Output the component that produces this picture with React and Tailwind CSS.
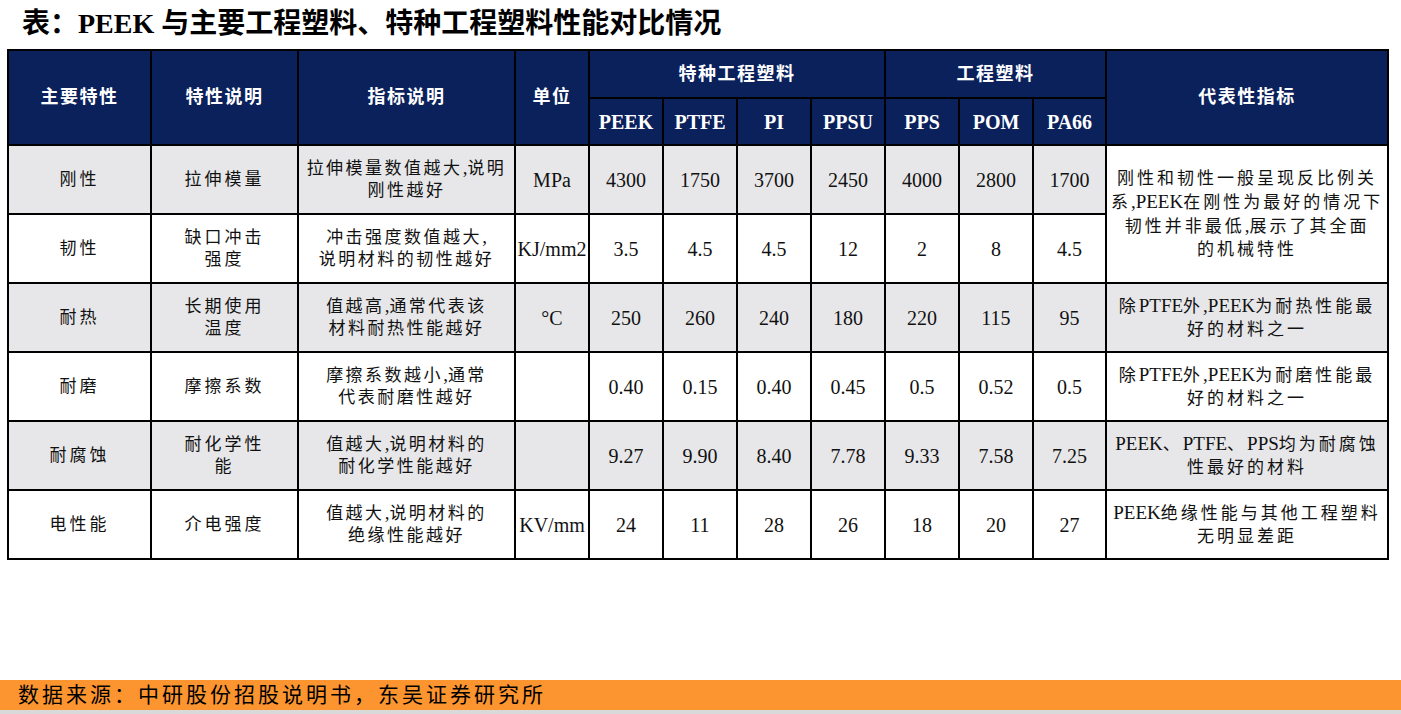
import React from "react"

const serif = { fontFamily: '"Liberation Serif", "Noto Sans CJK SC", serif' }

const cols = [143, 147, 217, 74, 74, 74, 74, 74, 74, 74, 73, 282]

const rows = [
  {
    name: "刚性",
    prop: ["拉伸模量"],
    desc: ["拉伸模量数值越大,说明", "刚性越好"],
    unit: "MPa",
    vals: ["4300", "1750", "3700", "2450", "4000", "2800", "1700"],
    note: ["刚性和韧性一般呈现反比例关", "系,PEEK在刚性为最好的情况下", "韧性并非最低,展示了其全面", "的机械特性"],
    span: 2,
    gray: true,
  },
  {
    name: "韧性",
    prop: ["缺口冲击", "强度"],
    desc: ["冲击强度数值越大,", "说明材料的韧性越好"],
    unit: "KJ/mm2",
    vals: ["3.5", "4.5", "4.5", "12", "2", "8", "4.5"],
    note: null,
  },
  {
    name: "耐热",
    prop: ["长期使用", "温度"],
    desc: ["值越高,通常代表该", "材料耐热性能越好"],
    unit: "°C",
    vals: ["250", "260", "240", "180", "220", "115", "95"],
    note: ["除PTFE外,PEEK为耐热性能最", "好的材料之一"],
    gray: true,
  },
  {
    name: "耐磨",
    prop: ["摩擦系数"],
    desc: ["摩擦系数越小,通常", "代表耐磨性越好"],
    unit: "",
    vals: ["0.40", "0.15", "0.40", "0.45", "0.5", "0.52", "0.5"],
    note: ["除PTFE外,PEEK为耐磨性能最", "好的材料之一"],
  },
  {
    name: "耐腐蚀",
    prop: ["耐化学性", "能"],
    desc: ["值越大,说明材料的", "耐化学性能越好"],
    unit: "",
    vals: ["9.27", "9.90", "8.40", "7.78", "9.33", "7.58", "7.25"],
    note: ["PEEK、PTFE、PPS均为耐腐蚀", "性最好的材料"],
    gray: true,
  },
  {
    name: "电性能",
    prop: ["介电强度"],
    desc: ["值越大,说明材料的", "绝缘性能越好"],
    unit: "KV/mm",
    vals: ["24", "11", "28", "26", "18", "20", "27"],
    note: ["PEEK绝缘性能与其他工程塑料", "无明显差距"],
  },
]

// latin runs inside chinese text are set a little larger and without tracking
const Mixed = ({ text }) =>
  text.split(/([A-Za-z0-9,]+)/).map((part, i) =>
    /^[A-Za-z0-9,]+$/.test(part) ? (
      <span key={i} className="text-[19px] tracking-normal">{part}</span>
    ) : (
      <span key={i}>{part}</span>
    )
  )

const Lines = ({ lines }) => (
  <div className="whitespace-nowrap">
    {lines.map((l, i) => (
      <div key={i}>
        <Mixed text={l} />
      </div>
    ))}
  </div>
)

const th = "border-2 border-black text-white font-bold text-center align-middle p-0"
const td = "border-2 border-black text-center align-middle p-0 text-[#111]"

export default function App() {
  return (
    <div className="w-[1401px] h-[714px] flex flex-col bg-white overflow-hidden" style={serif}>
      <h1 className="h-[49px] pl-[22px] pt-[6px] text-[28px] font-bold text-black leading-[36px]">
        表：PEEK 与主要工程塑料、特种工程塑料性能对比情况
      </h1>

      <table className="ml-[7px] w-[1380px] table-fixed border-collapse border-t border-t-[#bbb]">
        <colgroup>
          {cols.map((w, i) => (
            <col key={i} style={{ width: w }} />
          ))}
        </colgroup>
        <thead className="bg-[#0a215c]">
          <tr className="h-[48px]">
            <th rowSpan={2} className={`${th} text-[18px] tracking-[1.5px]`}>主要特性</th>
            <th rowSpan={2} className={`${th} text-[18px] tracking-[1.5px]`}>特性说明</th>
            <th rowSpan={2} className={`${th} text-[18px] tracking-[1.5px]`}>指标说明</th>
            <th rowSpan={2} className={`${th} text-[18px] tracking-[1.5px]`}>单位</th>
            <th colSpan={4} className={`${th} text-[18px] tracking-[1.5px]`}>特种工程塑料</th>
            <th colSpan={3} className={`${th} text-[18px] tracking-[1.5px]`}>工程塑料</th>
            <th rowSpan={2} className={`${th} text-[18px] tracking-[1.5px]`}>代表性指标</th>
          </tr>
          <tr className="h-[47px]">
            {["PEEK", "PTFE", "PI", "PPSU", "PPS", "POM", "PA66"].map((m) => (
              <th key={m} className={`${th} text-[20px]`}>{m}</th>
            ))}
          </tr>
        </thead>
        <tbody>
          {rows.map((r, i) => (
            <tr key={i} className={`h-[69px] ${r.gray ? "bg-[#e7e7e9]" : "bg-white"}`}>
              <td className={`${td} text-[17px] tracking-[3px]`}>{r.name}</td>
              <td className={`${td} text-[17px] tracking-[3px] leading-[22px]`}>
                <Lines lines={r.prop} />
              </td>
              <td className={`${td} text-[17px] tracking-[2.5px] leading-[22px]`}>
                <Lines lines={r.desc} />
              </td>
              <td className={`${td} text-[20px]`}>{r.unit}</td>
              {r.vals.map((v, j) => (
                <td key={j} className={`${td} text-[20px]`}>{v}</td>
              ))}
              {r.note && (
                <td
                  rowSpan={r.span || 1}
                  className={`${td} text-[17px] tracking-[3px] leading-[23px] ${r.span ? "bg-white" : ""}`}
                >
                  <Lines lines={r.note} />
                </td>
              )}
            </tr>
          ))}
        </tbody>
      </table>

      <div className="mt-auto">
        <div className="h-[30px] bg-[#fc952f] pl-[18px] text-[21px] leading-[30px] tracking-[3px] text-black">
          数据来源：中研股份招股说明书，东吴证券研究所
        </div>
        <div className="h-[4px] bg-[#d9d9d9]" />
      </div>
    </div>
  )
}
